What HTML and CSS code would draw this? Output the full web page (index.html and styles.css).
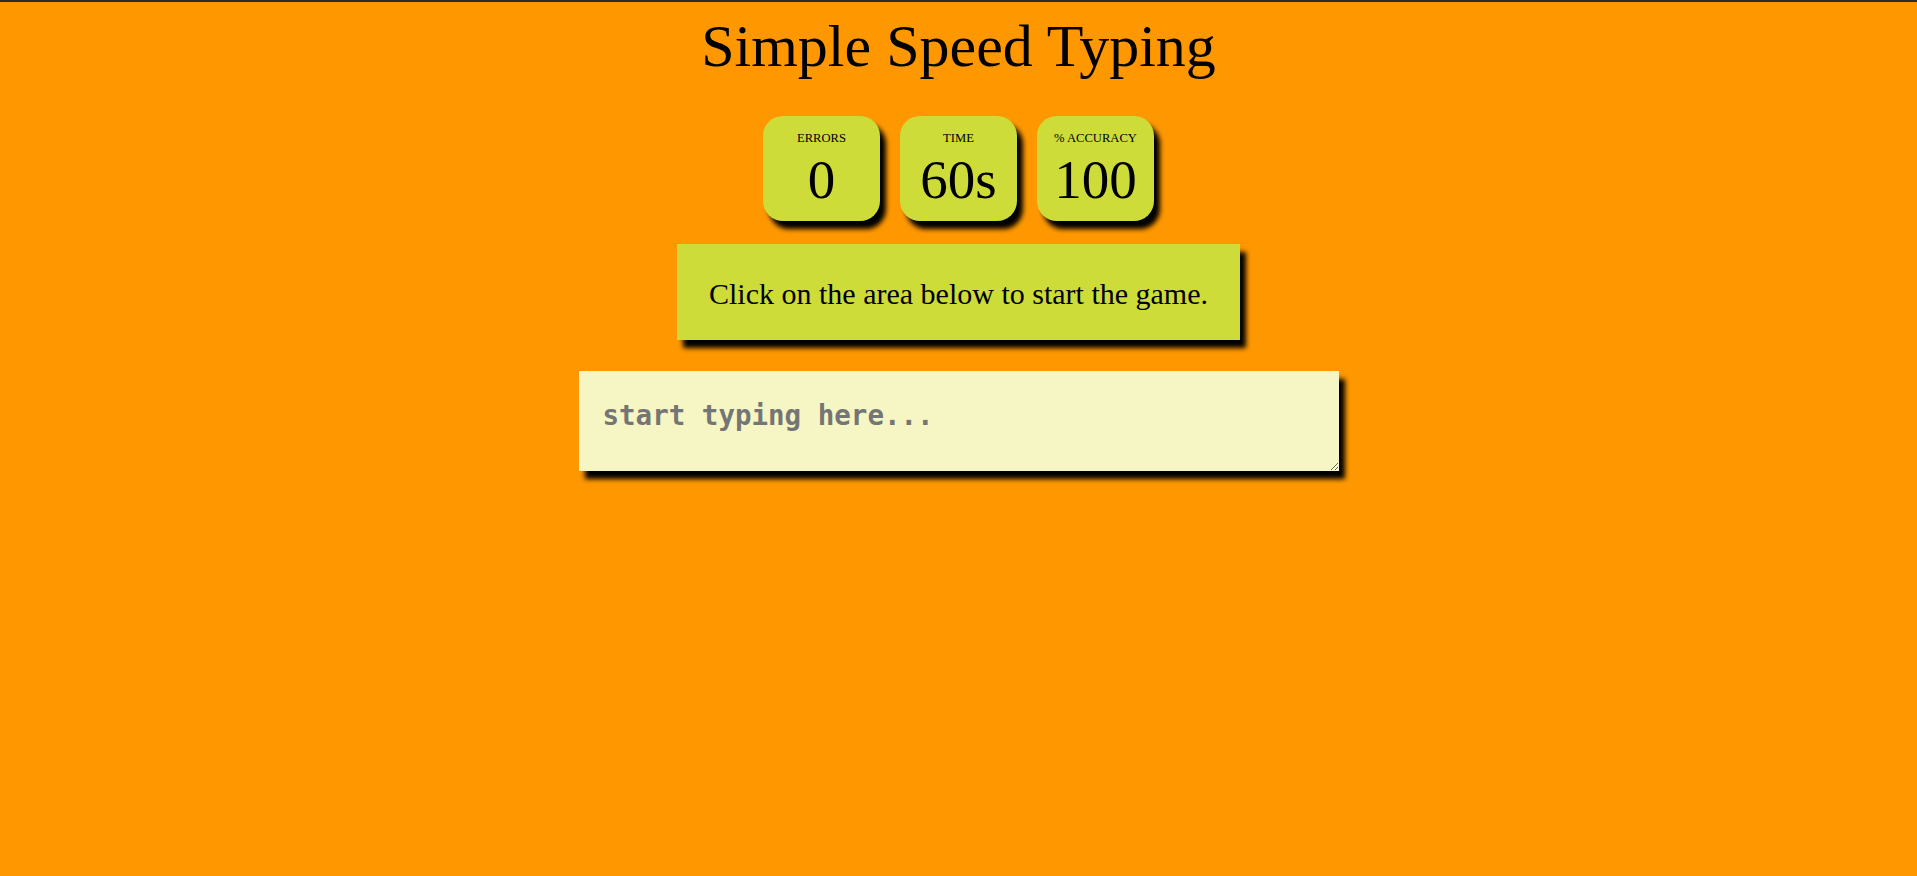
FILE: index.html
```html
<!DOCTYPE html>
<html>
<head>
<meta charset="utf-8">
<title>Simple Speed Typing</title>
<link rel="stylesheet" href="styles.css">
</head>
<body>
<div class="topbar"></div>
<div class="page">
  <h1 class="title">Simple Speed Typing</h1>
  <div class="stats">
    <div class="stat">
      <div class="stat-label">ERRORS</div>
      <div class="stat-value">0</div>
    </div>
    <div class="stat">
      <div class="stat-label">TIME</div>
      <div class="stat-value">60s</div>
    </div>
    <div class="stat">
      <div class="stat-label">% ACCURACY</div>
      <div class="stat-value">100</div>
    </div>
  </div>
  <div class="quote">Click on the area below to start the game.</div>
  <textarea class="input-area" placeholder="start typing here..."></textarea>
</div>
</body>
</html>
```
FILE: styles.css
```css
html, body {
  margin: 0;
  padding: 0;
  background: #ff9800;
}
body {
  font-family: "Liberation Serif", "Times New Roman", serif;
  color: #000;
  min-height: 876px;
}
.topbar {
  height: 2px;
  background: #2b2b2b;
}
.page {
  padding: 10px 8px 8px;
  display: flex;
  flex-direction: column;
  align-items: center;
}
.title {
  margin: 0;
  font-size: 60px;
  font-weight: normal;
  line-height: 69px;
  text-align: center;
}
.stats {
  margin-top: 35px;
  display: flex;
  gap: 20px;
}
.stat {
  box-sizing: border-box;
  width: 117px;
  height: 105px;
  background: #cddc39;
  border-radius: 20px;
  box-shadow: 6px 8px 5px #000;
  padding-top: 15px;
  text-align: center;
}
.stat-label {
  font-size: 12.6px;
  line-height: 14px;
}
.stat-value {
  margin-top: 3px;
  font-size: 55px;
  line-height: 64px;
}
.quote {
  margin-top: 23px;
  background: #cddc39;
  font-size: 30px;
  line-height: 34px;
  padding: 33px 32px 29px;
  box-shadow: 6px 8px 5px #000;
}
.input-area {
  margin-top: 31px;
  box-sizing: border-box;
  width: 760px;
  height: 100px;
  border: none;
  outline: none;
  background: #f6f6c4;
  box-shadow: 6px 8px 5px #000;
  padding: 28px 24px 20px;
  font-family: "DejaVu Sans Mono", monospace;
  font-weight: bold;
  font-size: 27.5px;
  color: #757575;
  display: block;
  resize: vertical;
}
.input-area::placeholder {
  color: #757575;
  opacity: 1;
}
```
